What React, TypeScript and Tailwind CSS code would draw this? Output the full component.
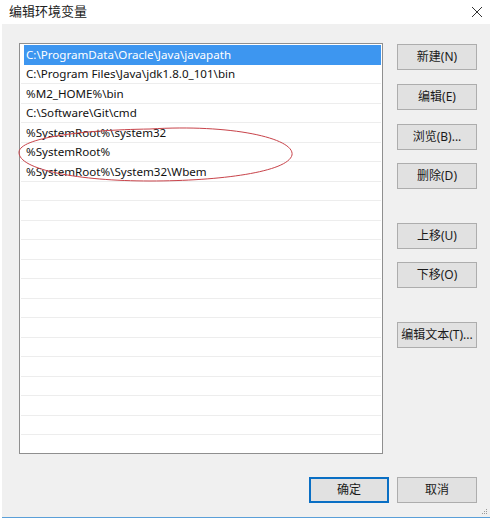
const paths = [
  "C:\\ProgramData\\Oracle\\Java\\javapath",
  "C:\\Program Files\\Java\\jdk1.8.0_101\\bin",
  "%M2_HOME%\\bin",
  "C:\\Software\\Git\\cmd",
  "%SystemRoot%\\system32",
  "%SystemRoot%",
  "%SystemRoot%\\System32\\Wbem",
];

const font = { fontFamily: '"Noto Sans", "Noto Sans CJK SC", sans-serif' };

function Btn({ children, className = "", primary = false }: any) {
  return (
    <div
      className={
        "w-[80px] h-[26px] flex items-center justify-center text-[12px] text-[#1a1a1a] bg-[#e1e1e1] " +
        (primary ? "border-2 border-[#0a6fc4] " : "border border-[#adadad] ") +
        className
      }
    >
      {children}
    </div>
  );
}

export default function App() {
  const rows = Array.from({ length: 21 }, (_, i) => paths[i] ?? "");

  return (
    <div
      className="relative w-[499px] h-[531px] bg-white overflow-hidden"
      style={font}
    >
      {/* title bar */}
      <div className="h-[24px] flex items-center justify-between pl-[9px] pr-[16px]">
        <span className="text-[13px] text-[#222]">编辑环境变量</span>
        <svg width="12" height="12" viewBox="0 0 12 12">
          <path d="M1 1 L11 11 M11 1 L1 11" stroke="#333" strokeWidth="1" />
        </svg>
      </div>

      {/* panel */}
      <div className="relative ml-[2px] w-[488px] h-[494px] bg-[#f0f0f0] border-b border-[#5a9fd8] pl-[17px] pt-[19px] flex flex-col">
        <div className="flex">
          <div className="w-[364px] h-[411px] bg-white border border-[#8f8f8f] pt-[1px] overflow-hidden">
            {rows.map((p, i) => (
              <div
                key={i}
                className={
                  "h-[19.5px] flex items-center text-[11.6px] " +
                  (i === 0
                    ? "bg-[#3d96f0] text-white ml-[4px] mr-[1px] pl-[2px]"
                    : "text-[#111] border-b border-[#ededed] ml-[1px] mr-[1px] pl-[5px]")
                }
              >
                {p}
              </div>
            ))}
          </div>

          <div className="ml-[14px] flex flex-col">
            <Btn className="mt-[1px]">新建(N)</Btn>
            <Btn className="mt-[14px]">编辑(E)</Btn>
            <Btn className="mt-[14px]">浏览(B)...</Btn>
            <Btn className="mt-[13px]">删除(D)</Btn>
            <Btn className="mt-[34px]">上移(U)</Btn>
            <Btn className="mt-[13px]">下移(O)</Btn>
            <Btn className="mt-[34px]">编辑文本(T)...</Btn>
          </div>
        </div>

        <div className="flex justify-end gap-[8px] mt-[23px] pr-[13px]">
          <Btn primary>确定</Btn>
          <Btn>取消</Btn>
        </div>

        {/* resize grip */}
        <div className="absolute right-[3px] bottom-[3px] grid grid-cols-3 gap-[1px]">
          {[0, 0, 1, 0, 1, 1, 1, 1, 1].map((v, i) => (
            <div
              key={i}
              className={"w-[1px] h-[1px] " + (v ? "bg-[#9a9a9a]" : "bg-transparent")}
            />
          ))}
        </div>
      </div>

      {/* red hand-drawn annotation */}
      <svg
        className="absolute left-0 top-0 pointer-events-none"
        width="499"
        height="531"
        viewBox="0 0 499 531"
      >
        <path
          d="M 150 129 C 230 124, 295 138, 292 155 C 288 172, 220 181, 150 181 C 80 181, 18 170, 19 152 C 20 138, 80 130, 150 129 Z"
          fill="none"
          stroke="#c8434a"
          strokeWidth="1"
        />
      </svg>
    </div>
  );
}
